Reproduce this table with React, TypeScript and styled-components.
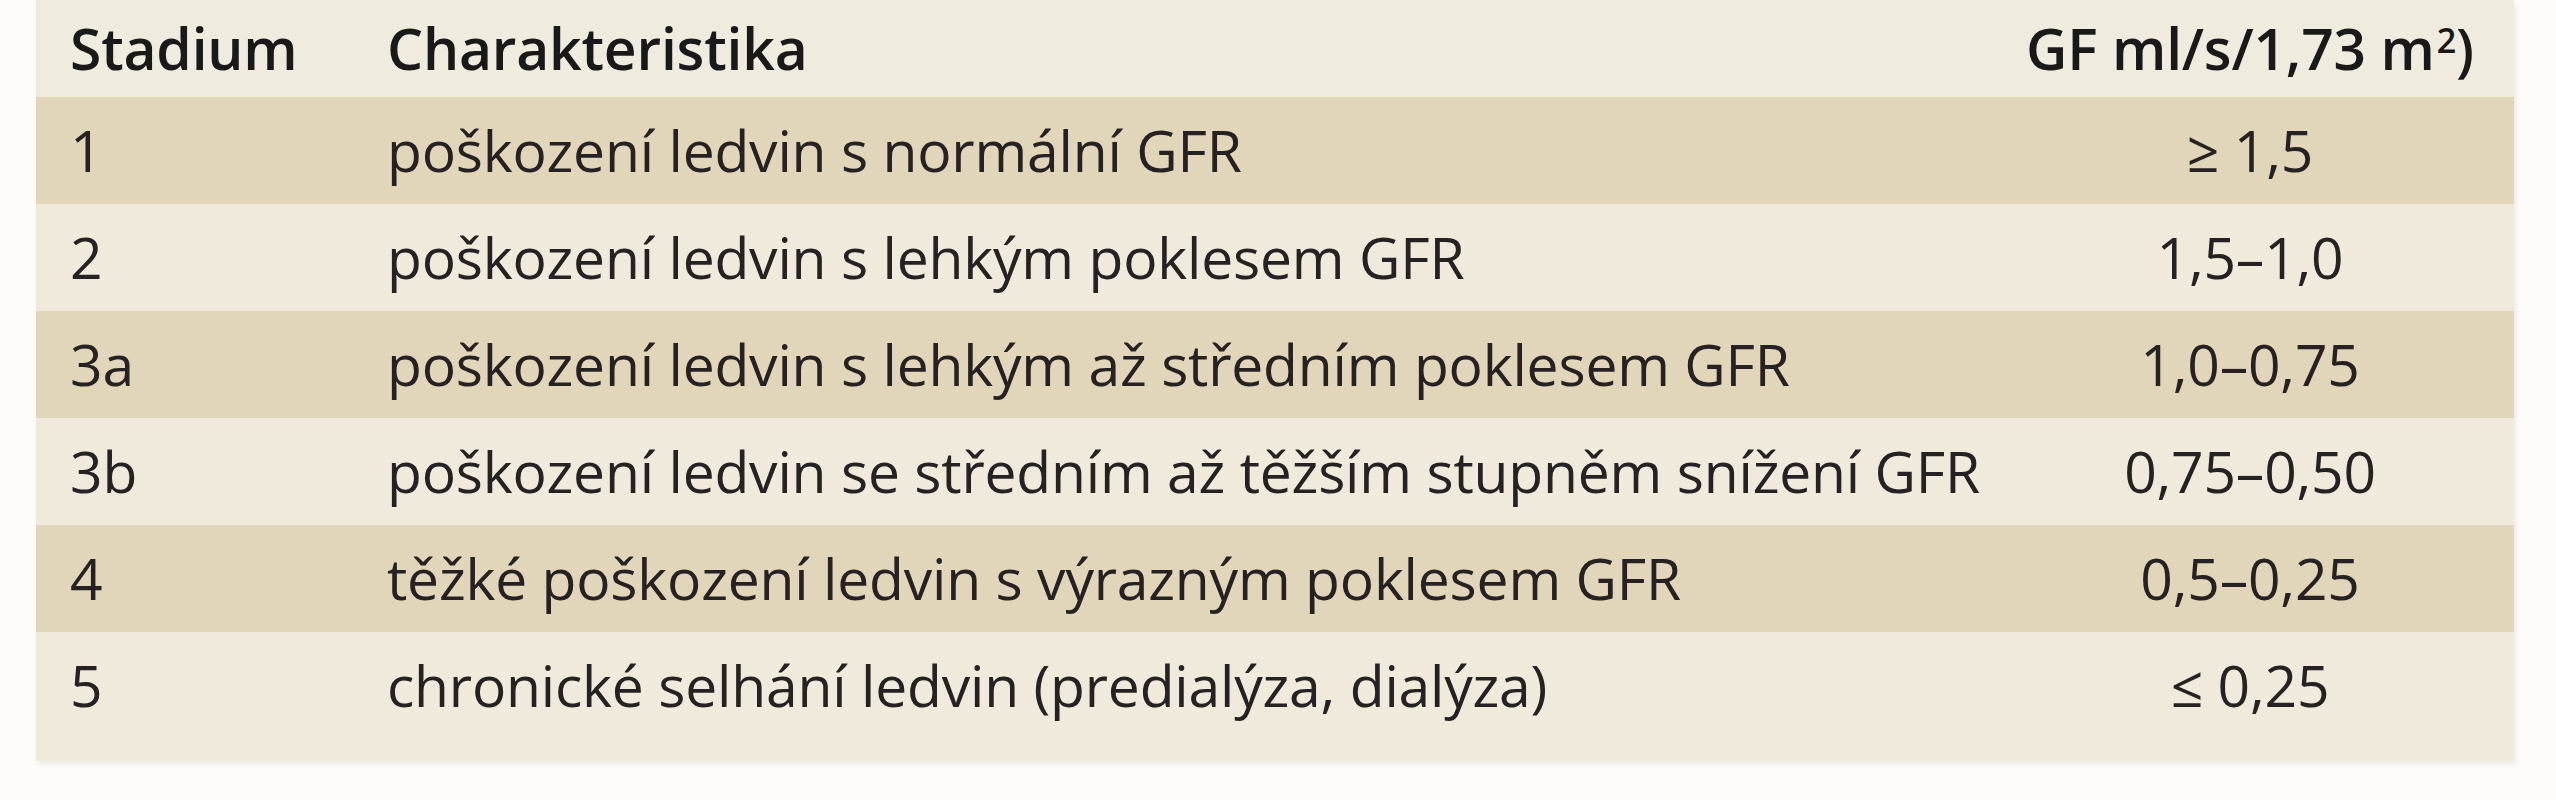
import React from "react";
import styled, { createGlobalStyle } from "styled-components";

const Global = createGlobalStyle`
  html, body {
    margin: 0;
    padding: 0;
    background: #fdfcf9;
  }
  body {
    font-family: "Open Sans", "Noto Sans", sans-serif;
    color: #231f20;
  }
`;

const Page = styled.div`
  width: 2556px;
  height: 800px;
  padding: 0 42px 0 36px;
  box-sizing: border-box;
`;

const Table = styled.div`
  display: grid;
  grid-template-columns: 351px 1599px 528px;
  width: 2478px;
  box-shadow: 2px 3px 5px rgba(120, 110, 90, 0.12);
`;

type Shade = "head" | "dark" | "light";

const bg: Record<Shade, string> = {
  head: "#f0ebdf",
  dark: "#e1d6b9",
  light: "#f0eadd",
};

const Cell = styled.div<{ $shade: Shade; $align?: "left" | "center"; $pad?: number; $last?: boolean; $head?: boolean }>`
  background: ${(p) => bg[p.$shade]};
  height: ${(p) => (p.$head ? 97 : p.$last ? 129 : 107)}px;
  box-sizing: border-box;
  padding-left: ${(p) => p.$pad ?? 0}px;
  padding-bottom: ${(p) => (p.$last ? 22 : 0)}px;
  display: flex;
  align-items: center;
  justify-content: ${(p) => (p.$align === "center" ? "center" : "flex-start")};
  font-size: 57px;
  font-weight: ${(p) => (p.$head ? 600 : 400)};
  letter-spacing: -0.2px;
  white-space: nowrap;
  line-height: 1;
  color: ${(p) => (p.$head ? "#1a1818" : "#262122")};
`;

const Label = styled.span`
  display: inline-block;
`;

const Sup = styled.sup`
  font-size: 0.6em;
  vertical-align: 0.5em;
  line-height: 0;
  margin-left: 2px;
`;

const rows: [string, string, string][] = [
  ["1", "poškození ledvin s normální GFR", "≥ 1,5"],
  ["2", "poškození ledvin s lehkým poklesem GFR", "1,5–1,0"],
  ["3a", "poškození ledvin s lehkým až středním poklesem GFR", "1,0–0,75"],
  ["3b", "poškození ledvin se středním až těžším stupněm snížení GFR", "0,75–0,50"],
  ["4", "těžké poškození ledvin s výrazným poklesem GFR", "0,5–0,25"],
  ["5", "chronické selhání ledvin (predialýza, dialýza)", "≤ 0,25"],
];

export default function App() {
  return (
    <Page>
      <Global />
      <Table>
        <Cell $shade="head" $head $pad={34}>Stadium</Cell>
        <Cell $shade="head" $head>Charakteristika</Cell>
        <Cell $shade="head" $head $align="center">
          <Label>
            GF ml/s/1,73 m<Sup>2</Sup>)
          </Label>
        </Cell>
        {rows.map(([s, c, v], i) => {
          const shade: Shade = i % 2 === 0 ? "dark" : "light";
          const last = i === rows.length - 1;
          return (
            <React.Fragment key={s}>
              <Cell $shade={shade} $pad={34} $last={last}>{s}</Cell>
              <Cell $shade={shade} $last={last}>{c}</Cell>
              <Cell $shade={shade} $align="center" $last={last}>{v}</Cell>
            </React.Fragment>
          );
        })}
      </Table>
    </Page>
  );
}
